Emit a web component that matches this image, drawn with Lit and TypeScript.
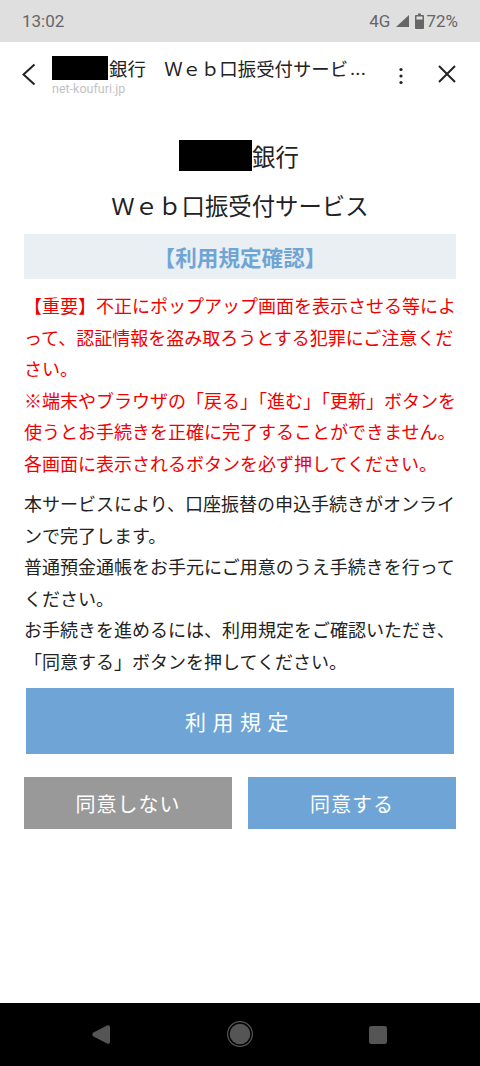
import { LitElement, html, css } from "lit";
import { customElement } from "lit/decorators.js";

@customElement("app-root")
export class AppRoot extends LitElement {
  static styles = css`
    :host { display: flex; flex-direction: column; width: 480px; height: 1066px; overflow: hidden; background: #fff;
      font-family: "Noto Sans CJK JP", "Noto Sans", sans-serif; color: #1a1a1a; }
    .status { height: 42px; flex: none; background: #dfdfdf; display: flex; align-items: center; justify-content: space-between;
      padding: 0 22px; box-sizing: border-box; font-family: Roboto, sans-serif; font-size: 17px; color: #666; }
    .status-right { display: flex; align-items: center; gap: 5px; }
    .status-right svg { display: block; }
    .pct { margin-left: -3px; }
    .bar { height: 68px; flex: none; display: flex; align-items: flex-start; box-sizing: border-box; }
    .back { margin: 20px 0 0 21px; width: 16px; height: 24px; flex: none; }
    .titles { margin: 13px 0 0 15px; width: 320px; flex: none; }
    .tline { display: flex; align-items: center; height: 26px; margin-bottom: -2px; font-size: 18.4px; line-height: 26px; color: #222; white-space: nowrap; }
    .tline .t { margin-left: 1px; }
    .dots { font-family: Roboto, sans-serif; font-size: 20px; margin-left: 2px; }
    .mask { display: inline-block; background: #000; flex: none; }
    .mask.small { width: 56px; height: 24px; }
    .mask.big { width: 73px; height: 31px; }
    .url { font-family: Roboto, sans-serif; font-size: 12.5px; line-height: 16px; color: #c2c2c2; margin-top: 2px; }
    .more { margin: 25px 0 0 26px; width: 6px; height: 18px; flex: none; }
    .close { margin: 22px 0 0 33px; width: 20px; height: 20px; flex: none; }
    main { flex: 1; padding: 30px 24px 0; box-sizing: border-box; }
    .h1 { font-size: 23.4px; line-height: 30px; display: flex; justify-content: center; align-items: center; color: #222; padding-right: 2px; }
    .h2 { font-size: 23.4px; line-height: 30px; text-align: center; margin-top: 19px; color: #222; }
    .banner { margin-top: 14px; height: 45px; background: #eaeff3; color: #6fa5d5; font-size: 21.6px; font-weight: 700; display: flex; align-items: center; justify-content: center; }
    p { margin: 0; font-size: 18px; line-height: 31.5px; }
    .red { color: #f00000; margin-top: 11px; }
    .black { margin-top: 9px; color: #222; }
    .btn { display: flex; align-items: center; justify-content: center; color: #fff; background: #6fa5d6; box-sizing: border-box; }
    .rules { margin: 11px 2px 0; height: 66px; font-size: 21px; letter-spacing: 6.5px; }
    .row { display: flex; justify-content: space-between; margin-top: 23px; }
    .half { width: 208px; height: 52px; font-size: 20px; letter-spacing: 1px; }
    .half.no { background: #999; }
    nav { height: 63px; flex: none; background: #000; display: flex; align-items: center; justify-content: center; }
    nav svg { display: block; width: 360px; height: 63px; }
  `;

  render() {
    return html`
      <div class="status">
        <span>13:02</span>
        <div class="status-right">
          <span>4G</span>
          <svg width="15" height="14" viewBox="0 0 15 14"><path d="M1 13L14 1v12z" fill="#666"/></svg>
          <svg width="9" height="16" viewBox="0 0 9 16"><path d="M3 0.5h3v1.5h2a1 1 0 0 1 1 1v12a1 1 0 0 1-1 1H1a1 1 0 0 1-1-1V3a1 1 0 0 1 1-1h2z" fill="#666"/><rect x="1.5" y="3.500" width="6" height="3" fill="#dfdfdf"/></svg>
          <span class="pct">72%</span>
        </div>
      </div>
      <div class="bar">
        <svg class="back" viewBox="0 0 16 24"><path d="M13.500 2.500L2.500 12.500l11 10" fill="none" stroke="#222" stroke-width="2"/></svg>
        <div class="titles">
          <div class="tline"><span class="mask small"></span><span class="t">銀行　Ｗｅｂ口振受付サービ</span><span class="dots">...</span></div>
          <div class="url">net-koufuri.jp</div>
        </div>
        <svg class="more" viewBox="0 0 6 18"><circle cx="3" cy="2.500" r="1.600" fill="#222"/><circle cx="3" cy="9" r="1.600" fill="#222"/><circle cx="3" cy="15.500" r="1.600" fill="#222"/></svg>
        <svg class="close" viewBox="0 0 20 20"><path d="M2 2l16 16M18 2L2 18" fill="none" stroke="#222" stroke-width="2"/></svg>
      </div>
      <main>
        <div class="h1"><span class="mask big"></span><span>銀行</span></div>
        <div class="h2">Ｗｅｂ口振受付サービス</div>
        <div class="banner">【利用規定確認】</div>
        <p class="red">【重要】不正にポップアップ画面を表示させる等によって、認証情報を盗み取ろうとする犯罪にご注意ください。<br>※端末やブラウザの「戻る」「進む」「更新」ボタンを使うとお手続きを正確に完了することができません。<br>各画面に表示されるボタンを必ず押してください。</p>
        <p class="black">本サービスにより、口座振替の申込手続きがオンラインで完了します。<br>普通預金通帳をお手元にご用意のうえ手続きを行ってください。<br>お手続きを進めるには、利用規定をご確認いただき、<br>「同意する」ボタンを押してください。</p>
        <div class="btn rules">利用規定</div>
        <div class="row">
          <div class="btn half no">同意しない</div>
          <div class="btn half">同意する</div>
        </div>
      </main>
      <nav>
        <svg viewBox="0 0 360 63">
          <path d="M33.500 29.500L47 22.500Q50 21.500 50 24V39Q50 41.500 47 40.500L33.500 33.500Q31 31.500 33.500 29.500z" fill="#555"/>
          <circle cx="180" cy="31" r="10.300" fill="#555"/>
          <circle cx="180" cy="31" r="12.400" fill="none" stroke="#555" stroke-width="1.200"/>
          <rect x="309" y="23" width="18" height="18" rx="2.500" fill="#555"/>
        </svg>
      </nav>
    `;
  }
}
